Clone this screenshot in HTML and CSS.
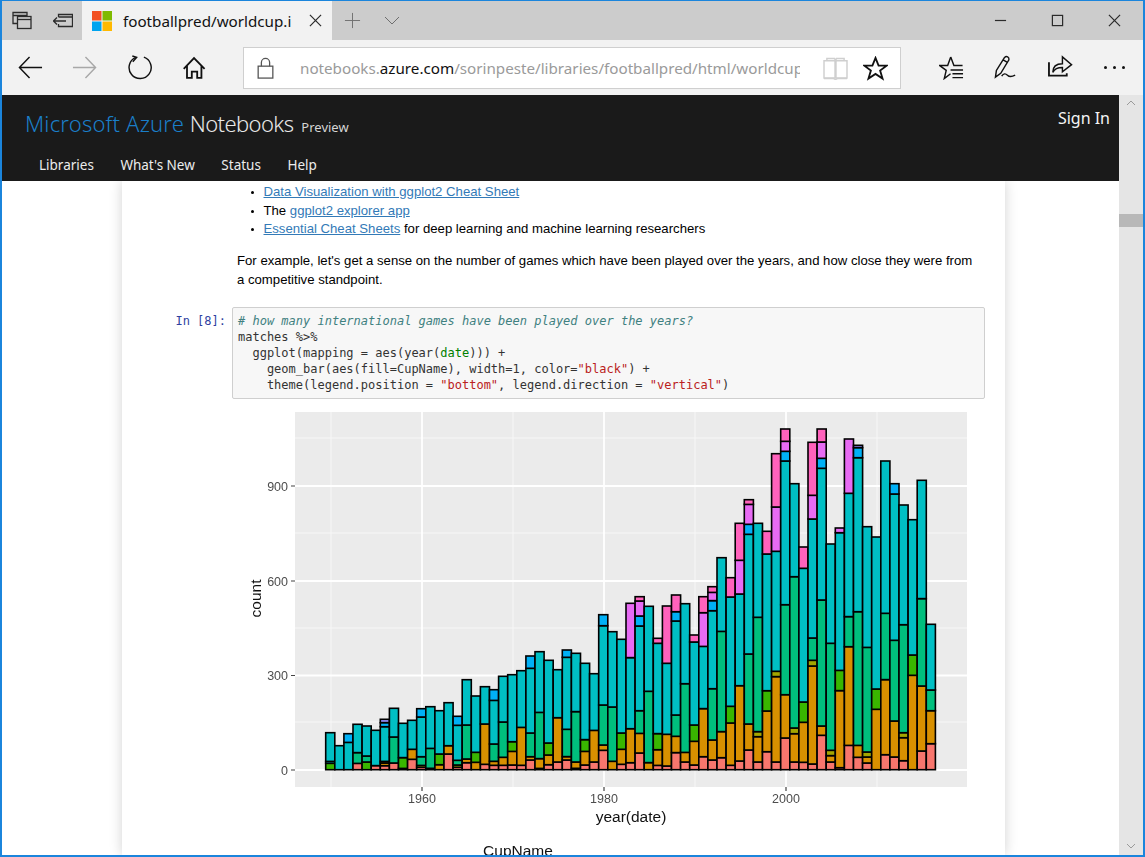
FILE: index.html
```html
<!DOCTYPE html>
<html lang="en">
<head>
<meta charset="utf-8">
<title>footballpred/worldcup.ipynb</title>
<link rel="stylesheet" href="styles.css">
</head>
<body>
<div class="window">
  <header class="titlebar">
    <div class="tabtools">
      <svg class="ic20" viewBox="0 0 20 20"><path d="M5 12.500H1V1.500H15V5.500M1 4.500H15" class="ln"/><rect x="5.500" y="5.500" width="13.500" height="12" class="ln"/><path d="M5.500 8.500H19" class="ln"/></svg>
      <svg class="ic20" viewBox="0 0 20 20"><path d="M5.500 6V3.500H19.500V15.500H5.500V13M5.500 6H19.500" class="ln"/><path d="M13 10H.5M4 6.500L.5 10 4 13.500" class="ln"/></svg>
    </div>
    <div class="tab">
      <svg class="logo" viewBox="0 0 20 20"><rect width="9.500" height="9.500" fill="#f25022"/><rect x="10.500" width="9.500" height="9.500" fill="#7fba00"/><rect y="10.500" width="9.500" height="9.500" fill="#00a4ef"/><rect x="10.500" y="10.500" width="9.500" height="9.500" fill="#ffb900"/></svg>
      <span class="tabtitle">footballpred/worldcup.i</span>
      <svg class="tabclose" viewBox="0 0 14 14"><path d="M1 1l12 12M13 1L1 13" class="ln"/></svg>
    </div>
    <svg class="newtab" viewBox="0 0 18 18"><path d="M9 1v16M1 9h16" class="ln grey"/></svg>
    <svg class="tabmenu" viewBox="0 0 16 10"><path d="M1 1l7 7 7-7" class="ln grey"/></svg>
    <div class="wincontrols">
      <svg class="winbtn" viewBox="0 0 14 14"><path d="M1 7h12" class="ln"/></svg>
      <svg class="winbtn" viewBox="0 0 14 14"><rect x="1.500" y="1.500" width="11" height="11" class="ln"/></svg>
      <svg class="winbtn" viewBox="0 0 14 14"><path d="M1 1l12 12M13 1L1 13" class="ln"/></svg>
    </div>
  </header>

  <div class="toolbar">
    <button class="toolbtn"><svg class="ic26" viewBox="0 0 26 26"><path d="M25 13H2M12 2L1.500 13 12 24" class="ln dark"/></svg></button>
    <button class="toolbtn"><svg class="ic26" viewBox="0 0 26 26"><path d="M1 13H24M14 2l10.500 11L14 24" class="ln faint"/></svg></button>
    <button class="toolbtn gap2"><svg class="ic26" viewBox="0 0 26 26"><path d="M16.500 2.200A11.500 11.500 0 1 1 8 2.500" class="ln dark"/><path d="M4.500 1L9 2.500 5 7" class="ln dark"/></svg></button>
    <button class="toolbtn"><svg class="ic26" viewBox="0 0 26 26"><path d="M1.800 14.500L12.500 3.200 23.500 14.500M5.200 11V23.800H10.200V17.200H15.800V23.800H20.200V11" class="ln dark thick"/></svg></button>
    <div class="address">
      <svg class="lock" viewBox="0 0 18 24"><rect x="1" y="10" width="16" height="13" class="ln mid"/><path d="M4.500 10V6a4.500 4.500 0 0 1 9 0v4" class="ln mid"/></svg>
      <div class="url"><span class="urlmute">notebooks.</span>azure.com<span class="urlmute">/sorinpeste/libraries/footballpred/html/worldcup.ipynb</span></div>
      <svg class="book" viewBox="0 0 26 24"><path d="M1 4H12.500V22H1zM13.500 4H25V22H13.500z" class="ln pale"/><path d="M4 4V1.500H12L13 4l1-2.500H22V4M1 22.500H11l2 1 2-1H25" class="ln pale"/></svg>
      <svg class="star" viewBox="0 0 26 26"><path d="M13 2l3.200 8h8.300l-6.700 5.200 2.500 8.300L13 18.600l-7.300 4.900 2.500-8.300L1.500 10h8.300z" class="ln dark thick"/></svg>
    </div>
    <button class="toolbtn first-right"><svg class="ic26" viewBox="0 0 26 26"><path d="M12.200 2.200L9 11H.8L7.500 16 5.500 24.500 12 19.500M12.200 2.200L15.500 11H24.500" class="ln dark"/><path d="M12 15.500H25M14 19.500H25M14 23.500H25" class="ln dark"/></svg></button>
    <button class="toolbtn wide"><svg class="ic26" viewBox="0 0 26 26"><path d="M11 2.500L2.500 16 1.500 23 7 19 15.500 5C16 2 13 .5 11 2.500zM9.500 5l4 2.500" class="ln dark"/><path d="M8 22c2-3 4-3 6-1s4 2 8 0" class="ln dark"/></svg></button>
    <button class="toolbtn narrow"><svg class="ic26" viewBox="0 0 26 26"><path d="M1 7.500V21.500H19.500V19" class="ln dark thick"/><path d="M5 18C5 12 9 9 15 9V2L24.500 10 15 17.500V13C10 13 7 14 5 18z" class="ln dark"/></svg></button>
    <button class="toolbtn wide"><span class="dots"><i></i><i></i><i></i></span></button>
  </div>

  <div class="viewport">
    <div class="site">
      <nav class="sitenav">
        <div class="brandrow">
          <a class="brand"><span class="azure">Microsoft Azure</span> <span class="notebooks">Notebooks</span></a>
          <span class="preview">Preview</span>
          <a class="signin">Sign In</a>
        </div>
        <ul class="menu">
          <li>Libraries</li>
          <li>What's New</li>
          <li>Status</li>
          <li>Help</li>
        </ul>
      </nav>
      <main class="page">
        <article class="paper">
          <section class="textcell">
            <ul class="links">
              <li><a href="#">Data Visualization with ggplot2 Cheat Sheet</a></li>
              <li>The <a href="#">ggplot2 explorer app</a></li>
              <li><a href="#">Essential Cheat Sheets</a> for deep learning and machine learning researchers</li>
            </ul>
            <p>For example, let's get a sense on the number of games which have been played over the years, and how close they were from a competitive standpoint.</p>
          </section>
          <section class="codecell">
            <div class="prompt">In [8]:</div>
            <pre class="code"><span class="cm"># how many international games have been played over the years?</span>
matches %&gt;%
  ggplot(mapping = aes(year(<span class="kw">date</span>))) +
    geom_bar(aes(fill=CupName), width=1, color=<span class="st">"black"</span>) +
    theme(legend.position = <span class="st">"bottom"</span>, legend.direction = <span class="st">"vertical"</span>)</pre>
          </section>
          <figure class="output">
            <svg class="plot" viewBox="232 405 753 460" width="753" height="460">
              <g class="soft">
                <rect x="295" y="412" width="672" height="375" class="panel"/>
                <g class="gridminor">
                  <path d="M331 412V787M513 412V787M695 412V787M877 412V787M295 438H967M295 533H967M295 628H967M295 722H967"/>
                </g>
                <g class="gridmajor">
                  <path d="M422 412V787M604 412V787M786 412V787M295 486H967M295 581H967M295 675.500H967M295 770H967"/>
                </g>
                <g id="bars"></g>
                <path class="ticks" d="M291 486H295M291 581H295M291 675.500H295M291 770H295M422 787V791M604 787V791M786 787V791"/>
                <text class="tick" x="288" y="490.500" text-anchor="end">900</text>
                <text class="tick" x="288" y="585.500" text-anchor="end">600</text>
                <text class="tick" x="288" y="680" text-anchor="end">300</text>
                <text class="tick" x="288" y="774.500" text-anchor="end">0</text>
                <text class="tick" x="422" y="803" text-anchor="middle">1960</text>
                <text class="tick" x="604" y="803" text-anchor="middle">1980</text>
                <text class="tick" x="786" y="803" text-anchor="middle">2000</text>
                <text class="axis" x="631" y="822" text-anchor="middle">year(date)</text>
                <text class="axis" x="261" y="598.500" text-anchor="middle" transform="rotate(-90 261 598.500)">count</text>
                <text class="axis" x="518" y="855.500" text-anchor="middle">CupName</text>
              </g>
            </svg>
          </figure>
        </article>
      </main>
    </div>
    <aside class="scrollbar">
      <svg class="sbarrow" viewBox="0 0 10 6"><path d="M1 5l4-4 4 4" class="ln sb"/></svg>
      <div class="thumb"></div>
      <svg class="sbarrow down" viewBox="0 0 10 6"><path d="M1 1l4 4 4-4" class="ln sb"/></svg>
    </aside>
  </div>
</div>
<script src="chart.js"></script>
</body>
</html>
```
FILE: styles.css
```css
* { box-sizing: border-box; }
html, body { margin: 0; padding: 0; overflow: hidden; }
body { width: 1145px; height: 857px; font-family: "Liberation Sans", Arial, sans-serif; background: #fff; }

.window {
  width: 1145px; height: 857px;
  display: flex; flex-direction: column;
  border: solid #1b85dc; border-width: 1px 2px 2px 2px;
  overflow: hidden;
}

/* Shared icon strokes */
.ln { fill: none; stroke: #2b2b2b; stroke-width: 1.300; }
.ln.grey { stroke: #6e6e6e; stroke-width: 1; }
.ln.dark { stroke: #111; stroke-width: 1.500; }
.ln.thick { stroke-width: 1.900; }
.ln.faint { stroke: #a8a8a8; stroke-width: 1.500; }
.ln.mid { stroke: #555; stroke-width: 1.400; }
.ln.pale { stroke: #cfcfcf; stroke-width: 1.500; }
.ln.sb { stroke: #9a9a9a; stroke-width: 1; }

/* Title bar */
.titlebar { height: 39px; background: #cccccc; display: flex; align-items: center; flex: none; }
.tabtools { width: 80px; display: flex; align-items: center; padding-left: 10px; gap: 21px; }
.ic20 { width: 20px; height: 20px; }
.tab { width: 250px; height: 39px; background: #f2f2f2; display: flex; align-items: center; padding-left: 10px; }
.logo { width: 20px; height: 20px; flex: none; }
.tabtitle { margin-left: 11px; width: 172px; font: 15.200px "Noto Sans", sans-serif; color: #111; white-space: nowrap; overflow: hidden; }
.tabclose { width: 13px; height: 13px; margin-left: 14px; }
.newtab { width: 17px; height: 17px; margin-left: 12px; }
.tabmenu { width: 16px; height: 10px; margin-left: 23px; }
.wincontrols { margin-left: auto; display: flex; align-items: center; padding-right: 22px; gap: 44px; }
.winbtn { width: 13px; height: 13px; }

/* Toolbar */
.toolbar { height: 55px; flex: none; background: #f2f2f2; display: flex; align-items: center; padding-left: 1px; }
.toolbtn { width: 54px; height: 40px; border: 0; padding: 0; background: transparent; display: flex; align-items: center; justify-content: center; flex: none; }
.toolbtn.gap2 { margin-left: 2px; }
.toolbtn.wide { width: 55px; }
.toolbtn.narrow { width: 53px; }
.ic26 { width: 25px; height: 25px; }
.address { width: 658px; height: 42px; margin-left: 22px; margin-top: 1px; background: #fff; border: 1px solid #cfcfcf; display: flex; align-items: center; flex: none; }
.lock { width: 17px; height: 22px; margin-left: 13px; flex: none; }
.url { margin-left: 26px; width: 500px; overflow: hidden; white-space: nowrap; font: 15.200px "Noto Sans", sans-serif; color: #111; }
.urlmute { color: #9a9a9a; }
.book { width: 25px; height: 23px; margin-left: 23px; flex: none; }
.star { width: 25px; height: 25px; margin-left: 15px; flex: none; }
.first-right { margin-left: 23px; width: 55px; }
.dots { display: flex; gap: 6px; }
.dots i { width: 3px; height: 3px; background: #111; border-radius: 50%; display: block; }

/* Viewport */
.viewport { flex: 1; min-height: 0; display: flex; }
.site { flex: 1; min-width: 0; display: flex; flex-direction: column; }
.scrollbar { width: 24px; flex: none; background: #e5e5e5; display: flex; flex-direction: column; align-items: center; padding-top: 5px; }
.sbarrow { width: 10px; height: 6px; }
.thumb { width: 100%; height: 13px; background: #b8b8b8; margin-top: 108px; }
.sbarrow.down { margin-top: auto; margin-bottom: 6px; }

/* Site nav */
.sitenav { height: 86px; flex: none; background: #1a1a1a; color: #f2f2f2; font-family: "Noto Sans", sans-serif; }
.brandrow { height: 61px; display: flex; align-items: baseline; padding: 13px 9px 0 23px; }
.brand { font-size: 22px; font-weight: 300; font-family: "Noto Sans", sans-serif; }
.azure { color: #1a7fc9; letter-spacing: .18px; }
.notebooks { color: #e8e8e8; letter-spacing: -.6px; }
.preview { font-size: 13px; margin-left: 8px; color: #d5d5d5; }
.signin { margin-left: auto; font-size: 16px; color: #f5f5f5; position: relative; top: -8px; }
.menu { list-style: none; margin: 0; padding: 0 0 0 37px; display: flex; gap: 26.500px; font: 13.500px "Noto Sans", sans-serif; color: #ececec; }

/* Page */
.page { flex: 1; min-height: 0; overflow: hidden; background: #fff; padding-left: 120px; }
.paper { width: 883px; height: 100%; background: #fff; box-shadow: 0 0 12px rgba(0,0,0,.18); }
.textcell { padding: 2px 0 0 115px; font-size: 13.170px; color: #000; width: 860px; }
.links { margin: 0; padding: 0 0 0 26.500px; line-height: 18.500px; }
.links li::marker { font-size: 10px; }
.textcell a { color: #337ab7; text-decoration: underline; }
.textcell p { margin: 13.500px 0 0; line-height: 18.800px; width: 742px; }
.codecell { display: flex; margin-top: 17.500px; }
.prompt { width: 110px; padding: 6px 6px 0 0; text-align: right; font: 12px/16px "DejaVu Sans Mono", monospace; color: #303f9f; flex: none; }
.code {
  margin: 0; width: 753px; height: 92px;
  padding: 5px 5px 0;
  background: #f7f7f7; border: 1px solid #cfcfcf; border-radius: 2px;
  font: 12px/16px "DejaVu Sans Mono", monospace; color: #333;
}
.cm { color: #408080; font-style: italic; }
.kw { color: #008000; }
.st { color: #ba2121; }

/* Plot */
.output { margin: 6px 0 0 110px; }
.plot { display: block; }
.soft { filter: blur(.4px); }
.panel { fill: #ebebeb; }
.gridminor path { stroke: #f7f7f7; stroke-width: 1; fill: none; }
.gridmajor path { stroke: #fff; stroke-width: 1.800; fill: none; }
.bar { stroke: #000; stroke-width: 1.600; }
.ticks { stroke: #444; stroke-width: 1.200; fill: none; }
.tick { font: 12.500px "Liberation Sans", sans-serif; fill: #4d4d4d; }
.axis { font: 15.500px "Liberation Sans", sans-serif; fill: #111; }
```
FILE: chart.js
```js
// Stacked counts per year, as [colour key, top edge] pairs from the bottom up.
// Edge values are measured on a 3x scale: y = 590 + edge / 3.
var C = { r: '#f8766d', o: '#d89000', l: '#a3a500', g: '#39b600', t: '#00bf7d', c: '#00bfc4', b: '#00b0f6', v: '#9590ff', p: '#e76bf3', m: '#ff62bc' };
var DATA = [
  'g520 c514 c428', 'c467', 'c457 b431', 'r520 t488 c403', 'g516 t498 c408', 'r527 c421',
  'r527 o519 l514 c410 b398 v388', 'r519 t441 c355', 'r535 g503 c400', 'r508 o478 c391',
  'r532 l526 t500 c381 b356', 'r535 t475 c350', 'o524 g492 c362', 'r492 o467 c338',
  'r532 l525 t511 c406 b379', 'r518 o507 t405 c269', 'o517 g487 c318', 'r523 o402 c290',
  'r526 o514 t462 c331 b299', 'r526 o502 t396 c259', 'r525 o484 g455 c254', 'r526 o412 c242',
  'r510 o500 t429 c235 b198', 'r535 o506 t367 c185', 'r524 o495 g459 c211', 'r516 o383 c239',
  'r510 o500 t418 c202 b180', 'r535 o516 t365 c190', 'r525 o484 g449 c220', 'r516 o421 c251',
  'r481 o465 t345 c107 b74', 'o514 t351 c125', 'r523 o478 g429 c148', 'r518 o416 c203 p40',
  'r489 o430 t362 c108 b78 p33 m20', 'o518 t304 c49', 'r526 o479 g431 c160 m145', 'r528 o433 c220 m48',
  'r488 o439 t375 c93 b65 m15', 'r516 o487 t281 c41', 'r525 o454 g405 c156 m135', 'r500 o356 c169 p68 m20',
  'r510 o450 t296 c62 b32 p7 m-10', 'r503 o425 t124 c-97', 'r526 o399 g349 c21 m-37', 'r513 o287 c12 p-89 m-200',
  'r480 o402 t192 c-167 b-197 p-257 m-271', 'r516 o440 l425 t82 c-200', 'r485 o363 g302 c-108 m-176',
  'r516 o260 l244 c-116 p-249 m-409', 'r444 o314 t44 c-387 b-416 p-446 m-483', 'r516 o431 l414 t-40 c-319',
  'r517 o397 g336 c-65 m-129', 'r522 o228 l211 t144 c-213 p-284 m-443', 'r436 o408 t30 c-365 b-395 p-444 m-483',
  'r516 o497 l481 t160 c-138', 'r533 o302 g241 c-172 p-186', 'r466 o170 t80 c-290 p-453', 'r502 o466 t65 c-397 b-427 v-434',
  'r519 o501 l486 t172 c-190', 'o358 g297 c-159', 'r494 o269 t70 c-387', 'r501 o393 t151 c-288 b-319',
  'r512 o443 l428 t104 c-255', 'o256 g195 c-211', 'r483 o288 t26 c-329', 'r461 o362 t300 c103'
];
var NS = 'http://www.w3.org/2000/svg';
var group = document.getElementById('bars');
DATA.forEach(function (bar, i) {
  var x = 325.7 + i * 9.1;
  var bottom = 769.7;
  bar.split(' ').forEach(function (seg) {
    var top = 590 + parseFloat(seg.slice(1)) / 3;
    var r = document.createElementNS(NS, 'rect');
    r.setAttribute('class', 'bar');
    r.setAttribute('x', x.toFixed(1));
    r.setAttribute('y', top.toFixed(1));
    r.setAttribute('width', '9.1');
    r.setAttribute('height', (bottom - top).toFixed(1));
    r.setAttribute('fill', C[seg[0]]);
    group.appendChild(r);
    bottom = top;
  });
});
```
